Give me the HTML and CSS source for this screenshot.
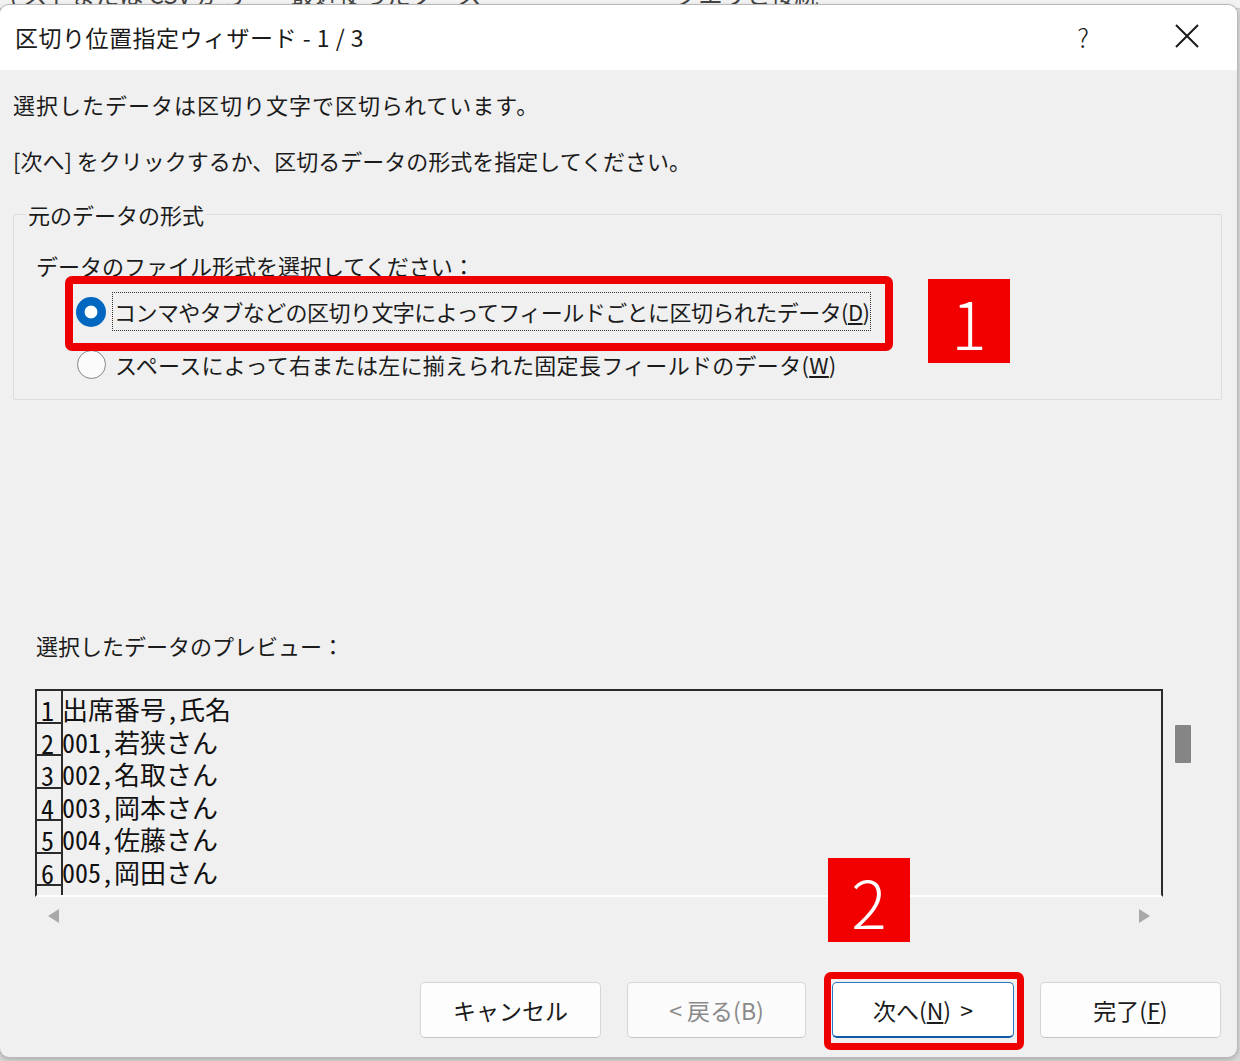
FILE: index.html
```html
<!DOCTYPE html>
<html lang="ja">
<head>
<meta charset="utf-8">
<title>区切り位置指定ウィザード</title>
<link rel="stylesheet" href="styles.css">
</head>
<body>
<div class="ribbon">
  <span class="rb-item rb-a">キストまたは CSV から</span>
  <span class="rb-sep"></span>
  <span class="rb-item rb-b">最近使ったソース</span>
  <span class="rb-sep rb-sep2"></span>
  <span class="rb-item rb-c">クエリと接続</span>
  <span class="rb-sep"></span>
  <span class="rb-item rb-d">フラッシュ</span>
</div>

<div class="dialog">
  <div class="titlebar">
    <div class="title">区切り位置指定ウィザード - 1 / 3</div>
    <div class="tb-help">?</div>
    <div class="tb-close">
      <svg width="24" height="24" viewBox="0 0 24 24"><path d="M1 1 L23 23 M23 1 L1 23" stroke="#1a1a1a" stroke-width="2" fill="none"/></svg>
    </div>
  </div>

  <div class="body">
    <p class="line l1">選択したデータは区切り文字で区切られています。</p>
    <p class="line l2">[次へ] をクリックするか、区切るデータの形式を指定してください。</p>

    <fieldset class="group">
      <legend class="legend">元のデータの形式</legend>
      <div class="line prompt">データのファイル形式を選択してください：</div>
      <div class="radio-row first">
        <span class="radio on"></span>
        <span class="radio-label focus">コンマやタブなどの区切り文字によってフィールドごとに区切られたデータ(<u>D</u>)</span>
      </div>
      <div class="radio-row">
        <span class="radio"></span>
        <span class="radio-label wide">スペースによって右または左に揃えられた固定長フィールドのデータ(<u>W</u>)</span>
      </div>
    </fieldset>

    <div class="line preview-label">選択したデータのプレビュー：</div>

    <div class="preview-wrap">
      <div class="preview">
        <div class="prow"><span class="pnum">1</span><span class="ptext">出席番号,氏名</span></div>
        <div class="prow"><span class="pnum">2</span><span class="ptext">001,若狭さん</span></div>
        <div class="prow"><span class="pnum">3</span><span class="ptext">002,名取さん</span></div>
        <div class="prow"><span class="pnum">4</span><span class="ptext">003,岡本さん</span></div>
        <div class="prow"><span class="pnum">5</span><span class="ptext">004,佐藤さん</span></div>
        <div class="prow"><span class="pnum">6</span><span class="ptext">005,岡田さん</span></div>
        <div class="prow"><span class="pnum">7</span><span class="ptext"></span></div>
      </div>
      <div class="vscroll"><div class="vthumb"></div></div>
    </div>
    <div class="hscroll">
      <span class="arrow-left"></span>
      <span class="arrow-right"></span>
    </div>

    <div class="buttons">
      <button class="btn">キャンセル</button>
      <button class="btn disabled">&lt; 戻る(B)</button>
      <button class="btn default">次へ(<u>N</u>) &gt;</button>
      <button class="btn">完了(<u>F</u>)</button>
    </div>
  </div>

  <div class="mark box1"></div>
  <div class="mark box2"></div>
  <div class="badge badge1">1</div>
  <div class="badge badge2">2</div>
</div>
</body>
</html>
```
FILE: styles.css
```css
html, body {
  margin: 0;
  padding: 0;
}
body {
  width: 1240px;
  height: 1061px;
  background: #d9d9d9;
  position: relative;
  overflow: hidden;
  font-family: "Noto Sans CJK JP", "Noto Sans", sans-serif;
  color: #1b1b1b;
}

/* Excel ribbon peeking behind the dialog */
.ribbon {
  height: 8px;
  background: #f3f3f3;
  display: flex;
  align-items: flex-start;
  overflow: hidden;
  border-bottom: 1px solid #cfcfcf;
}
.rb-item {
  font-size: 24px;
  line-height: 24px;
  margin-top: -18px;
  color: #444;
  white-space: nowrap;
}
.rb-sep {
  width: 1px;
  height: 8px;
  background: #bdbdbd;
  margin: 0 18px;
}
.rb-b { margin-left: 10px; }
.rb-sep2 { margin-left: 175px; }
.rb-d { margin-left: 380px; color: #9a9a9a; }

/* Dialog window */
.dialog {
  position: absolute;
  left: 0;
  top: 5px;
  width: 1237px;
  height: 1052px;
  background: #f0f0f0;
  border-radius: 9px;
  box-shadow: 0 0 0 1px #b8b8b8, 0 2px 6px rgba(0,0,0,0.25);
  overflow: hidden;
  display: flex;
  flex-direction: column;
}

.titlebar {
  height: 65px;
  flex: none;
  background: #ffffff;
  display: flex;
  align-items: center;
  padding-left: 15px;
}
.title {
  font-size: 23px;
  line-height: 32px;
  letter-spacing: 0.5px;
  flex: 1;
  margin-top: -1px;
}
.tb-help {
  font-size: 26px;
  font-weight: 300;
  width: 30px;
  text-align: center;
  margin-right: 77px;
  margin-top: -2px;
}
.tb-close {
  width: 24px;
  height: 24px;
  margin-right: 38px;
  margin-top: -3px;
}

.body {
  flex: 1;
  padding: 0 15px 0 13px;
  display: flex;
  flex-direction: column;
}
.line {
  font-size: 22px;
  line-height: 32px;
  margin: 0;
  white-space: nowrap;
}
.l1 { margin-top: 18px; letter-spacing: 1px; }
.l2 { margin-top: 24px; }

.group {
  margin: 22px 0 0 0;
  padding: 0 0 8px 0;
  border: 1px solid #dcdcdc;
  border-radius: 2px;
  min-width: 0;
}
.legend {
  font-size: 22px;
  line-height: 32px;
  margin-left: 12px;
  padding: 0 2px;
}
.prompt {
  margin-top: 19px;
  padding-left: 22px;
}
.radio-row {
  height: 53px;
  display: flex;
  align-items: center;
  padding-left: 62px;
}
.radio-row.first { margin-top: 4px; }
.radio {
  width: 27px;
  height: 27px;
  border-radius: 50%;
  border: 1.5px solid #858585;
  background: #fbfbfb;
  flex: none;
  margin-right: 7px;
  margin-left: 1px;
  box-sizing: content-box;
}
.radio.on {
  width: 30px;
  height: 30px;
  border: none;
  margin-left: 0;
  margin-right: 6px;
  background: radial-gradient(circle, #ffffff 0 6px, #0067c0 6.8px);
}
.radio-label {
  font-size: 22px;
  line-height: 37px;
  border: 1px dotted transparent;
  padding: 0 1px;
  white-space: nowrap;
  letter-spacing: -0.55px;
}
.radio-label.wide {
  letter-spacing: 0.3px;
}
.radio-label.focus {
  border-color: #333;
}

.preview-label {
  margin-top: 229px;
  padding-left: 23px;
}

.preview-wrap {
  margin-top: 28px;
  margin-left: 22px;
  display: flex;
}
.preview {
  width: 1124px;
  height: 204px;
  border: 2px solid #2b2b2b;
  border-bottom: 2px solid #ffffff;
  overflow: hidden;
  background: #f0f0f0;
}
.prow {
  height: 32.5px;
  display: flex;
  font-family: "Noto Sans Mono CJK JP", "Noto Sans CJK JP", monospace;
  font-size: 26px;
  line-height: 36px;
  color: #111;
}
.pnum {
  width: 26px;
  flex: none;
  box-sizing: border-box;
  border-right: 2px solid #2b2b2b;
  border-bottom: 2px solid #2b2b2b;
  padding-left: 4px;
  line-height: 38px;
  overflow: hidden;
}
.ptext {
  white-space: nowrap;
  margin-left: -1px;
}
.vscroll {
  width: 40px;
  padding-left: 12px;
  padding-top: 36px;
}
.vthumb {
  width: 16px;
  height: 38px;
  background: #858585;
  border-radius: 1px;
}
.hscroll {
  height: 38px;
  width: 1128px;
  margin-left: 22px;
  display: flex;
  align-items: center;
  justify-content: space-between;
}
.arrow-left, .arrow-right {
  width: 0;
  height: 0;
  border-top: 7px solid transparent;
  border-bottom: 7px solid transparent;
}
.arrow-left {
  border-right: 11px solid #a8a8a8;
  margin-left: 13px;
}
.arrow-right {
  border-left: 11px solid #a8a8a8;
  margin-right: 13px;
}

.buttons {
  margin-top: 47px;
  display: flex;
  justify-content: flex-end;
  gap: 26px;
  padding-right: 1px;
}
.btn {
  width: 181px;
  height: 56px;
  font-family: "Noto Sans CJK JP", sans-serif;
  font-size: 23px;
  color: #1b1b1b;
  background: #fdfdfd;
  border: 1px solid #d6d6d6;
  border-bottom-color: #c4c4c4;
  border-radius: 5px;
  padding: 0;
}
.btn.disabled {
  color: #8a8a8a;
  width: 179px;
  background: #fbfbfb;
}
.btn.default {
  width: 182px;
  word-spacing: 4px;
  border: 1px solid #2a78c5;
  border-bottom: 2px solid #0f5aa8;
  background: #ffffff;
}

/* annotation overlays */
.mark {
  position: absolute;
  border: 8px solid #ee0000;
  border-radius: 7px;
  box-sizing: border-box;
}
.box1 {
  left: 65px;
  top: 271px;
  width: 828px;
  height: 75px;
}
.box2 {
  left: 824px;
  top: 967px;
  width: 200px;
  height: 78px;
  border-width: 7px;
}
.badge {
  position: absolute;
  background: #f20000;
  color: #ffffff;
  font-family: "Noto Sans CJK JP", sans-serif;
  font-weight: 300;
  font-size: 66px;
  line-height: 84px;
  text-align: center;
  width: 82px;
  height: 84px;
}
.badge1 { left: 928px; top: 274px; }
.badge2 { left: 828px; top: 853px; }
```
